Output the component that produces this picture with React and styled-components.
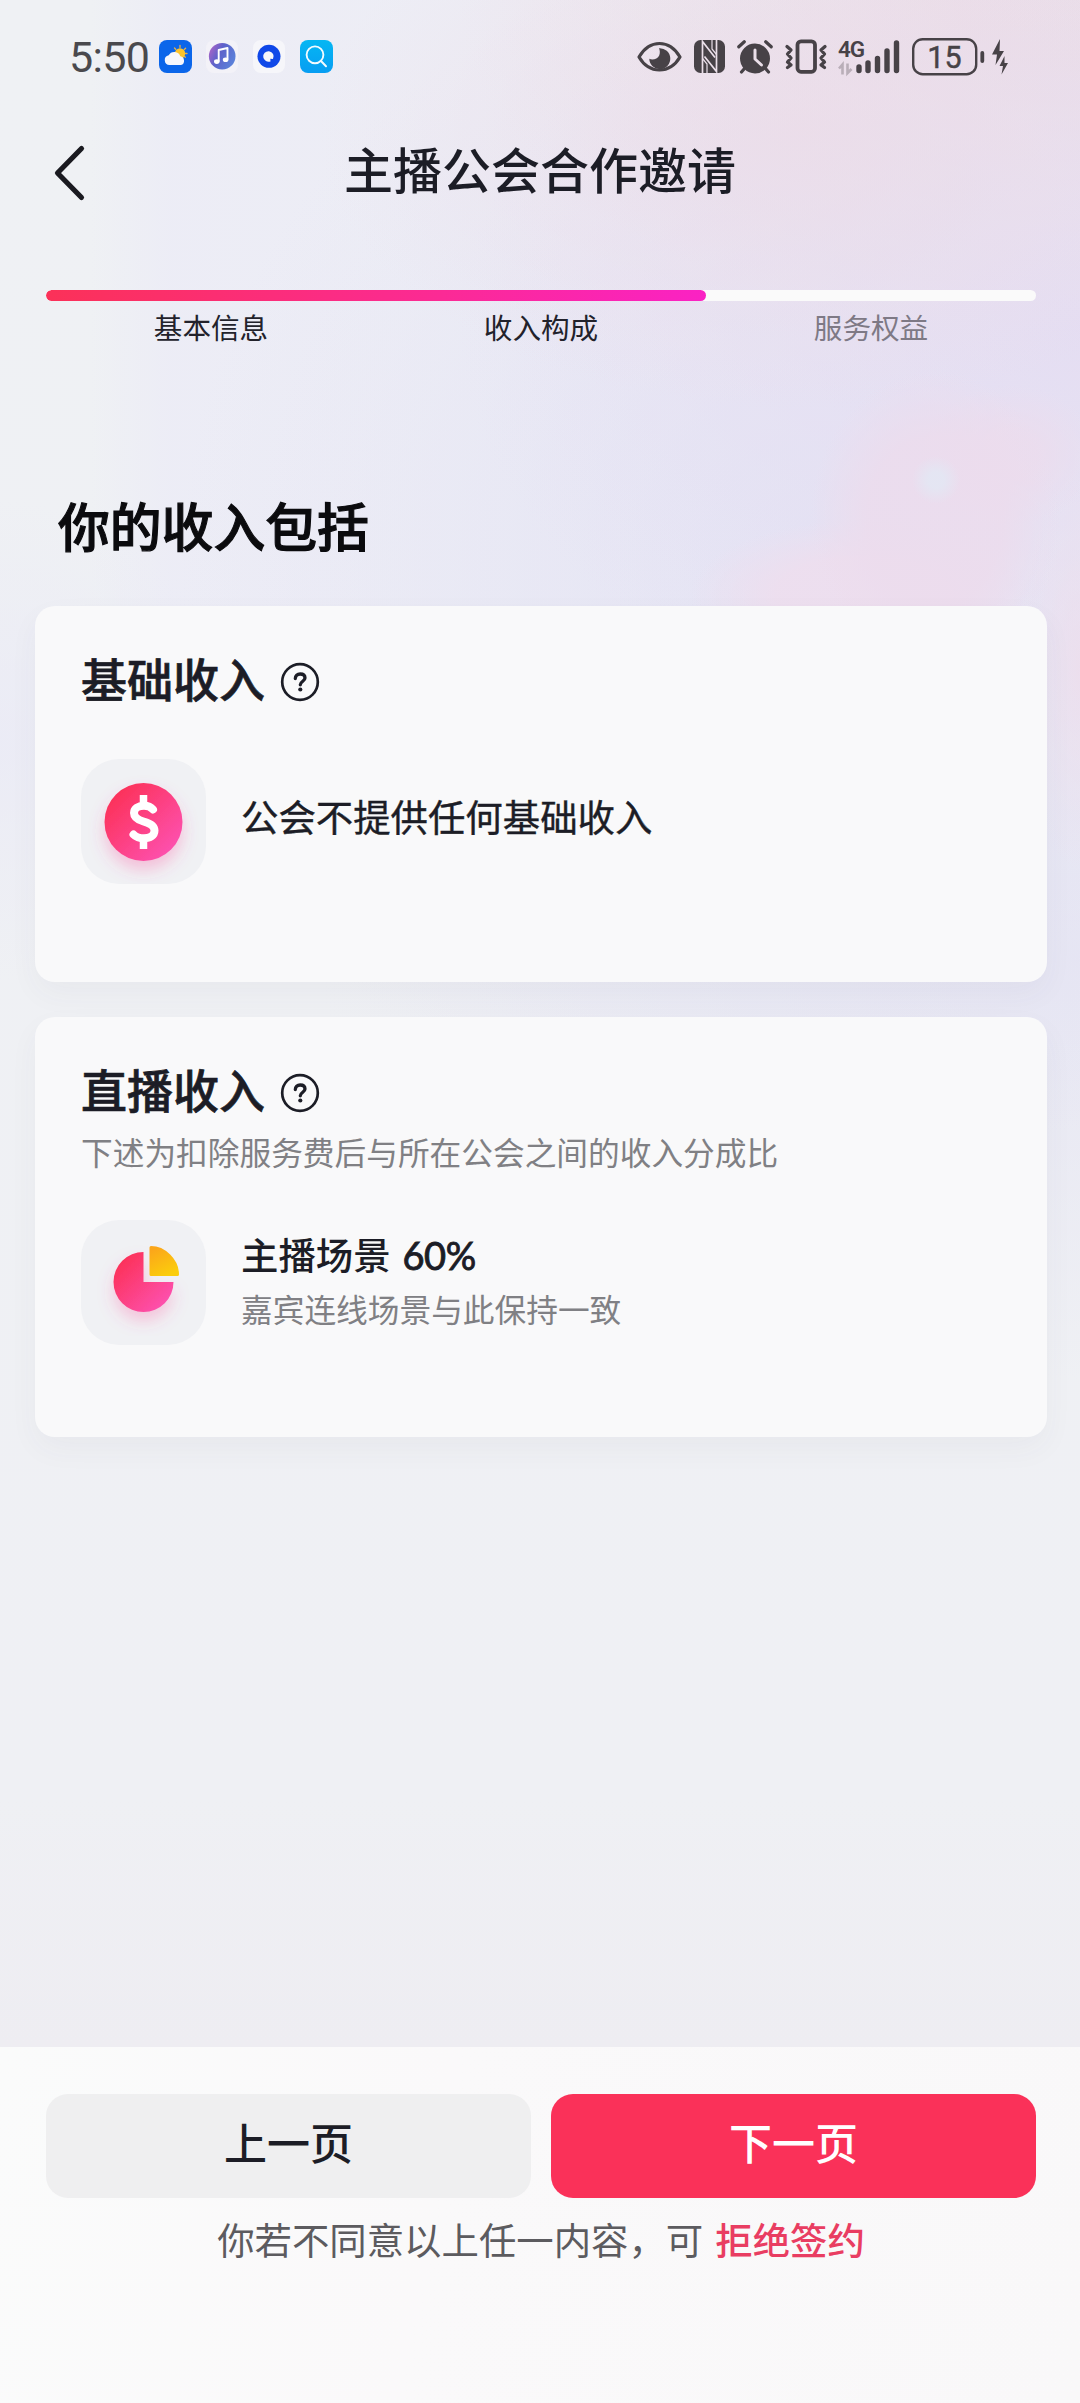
import React from "react";
import styled, { createGlobalStyle } from "styled-components";

const GlobalStyle = createGlobalStyle`
  * { box-sizing: border-box; }
  body { margin: 0; background: #eff0f4; }
`;

const Screen = styled.div`
  width: 1080px;
  height: 2403px;
  display: flex;
  flex-direction: column;
  overflow: hidden;
  font-family: "Noto Sans CJK SC", sans-serif;
  color: #1c1d26;
  background:
    radial-gradient(circle at 936px 480px, rgba(228, 230, 243, 0.95) 8px, rgba(228, 230, 243, 0) 24px),
    radial-gradient(ellipse 125px 150px at 935px 520px, rgba(236, 220, 237, 0.85) 55%, rgba(236, 220, 237, 0) 100%),
    radial-gradient(ellipse 90px 70px at 1010px 455px, rgba(236, 220, 237, 0.8) 30%, rgba(236, 220, 237, 0) 100%),
    radial-gradient(ellipse 170px 75px at 860px 595px, rgba(238, 222, 238, 0.85) 50%, rgba(238, 222, 238, 0) 100%),
    radial-gradient(ellipse 60px 200px at 1080px 670px, rgba(237, 221, 236, 0.8) 0, rgba(237, 221, 236, 0) 100%),
    radial-gradient(ellipse 480px 280px at 800px 130px, rgba(236, 220, 232, 0.75) 0, rgba(236, 220, 232, 0) 100%),
    radial-gradient(ellipse 620px 420px at 1080px 330px, rgba(228, 220, 242, 0.9) 0, rgba(228, 220, 242, 0) 100%),
    radial-gradient(ellipse 620px 340px at 1080px 0, rgba(235, 222, 231, 0.95) 20%, rgba(235, 222, 231, 0) 100%),
    radial-gradient(ellipse 640px 620px at 820px 560px, rgba(226, 225, 244, 0.8) 0, rgba(226, 225, 244, 0) 100%),
    radial-gradient(ellipse 760px 420px at 1080px 960px, rgba(229, 228, 243, 0.85) 0, rgba(229, 228, 243, 0) 100%),
    radial-gradient(ellipse 240px 240px at 0 740px, rgba(234, 234, 246, 0.8) 0, rgba(234, 234, 246, 0) 100%),
    linear-gradient(90deg, rgba(236, 237, 246, 0) 90px, rgba(236, 236, 246, 0.9) 170px, rgba(236, 235, 244, 0.3) 900px) 0 0 / 1080px 640px no-repeat,
    linear-gradient(#eff1f4 0, #eff0f4 1800px, #eeedf2 2047px);
`;

const StatusBar = styled.div`
  height: 113px;
  display: flex;
  align-items: center;
  justify-content: space-between;
  padding: 0 71px 0 69px;
  color: #474247;
  svg { display: block; flex: none; overflow: visible; }
`;

const StatusGroup = styled.div`
  display: flex;
  align-items: center;
`;

const Clock = styled.span`
  width: 90px;
  font: 400 43px/56px Roboto, sans-serif;
  letter-spacing: -0.7px;
  color: #4a494d;
  white-space: nowrap;
`;

const Gap = styled.span`
  flex: none;
  width: ${(p) => p.$w}px;
`;

const Header = styled.header`
  height: 115px;
  display: grid;
  grid-template-columns: 140px 1fr 140px;
  align-items: center;
`;

const BackButton = styled.button`
  display: flex;
  border: 0;
  padding: 4px 0 0 49px;
  background: none;
`;

const Title = styled.h1`
  margin: 0 0 5px;
  font-size: 49px;
  font-weight: 500;
  line-height: 70px;
  text-align: center;
  white-space: nowrap;
`;

const Progress = styled.div`
  margin: 62px 44px 0 46px;
`;

const Track = styled.div`
  height: 11px;
  border-radius: 6px;
  background: #fafafa;
  overflow: hidden;
`;

const Fill = styled.div`
  width: 66.67%;
  height: 100%;
  border-radius: 6px;
  background: linear-gradient(90deg, #fb3158, #fb2a95 60%, #fa22c4);
`;

const Steps = styled.div`
  display: grid;
  grid-template-columns: repeat(3, 1fr);
  margin-top: 6px;
`;

const Step = styled.span`
  font-size: 28.6px;
  line-height: 40px;
  text-align: center;
  color: ${(p) => (p.$done ? "#22222b" : "#7e7985")};
`;

const Section = styled.main`
  flex: 1;
  padding: 142px 33px 0 35px;
  display: flex;
  flex-direction: column;
`;

const Heading = styled.h2`
  margin: 0 0 45px 23px;
  font-size: 51.8px;
  font-weight: 500;
  line-height: 72px;
  color: #0b0b0e;
  -webkit-text-stroke: 1.1px #0b0b0e;
`;

const Card = styled.section`
  height: ${(p) => p.$h}px;
  margin-bottom: 35px;
  padding: 38px 46px 0;
  border-radius: 20px;
  background: #f9f9fa;
  box-shadow: 0 12px 30px rgba(60, 60, 100, 0.045);
`;

const CardTitle = styled.h3`
  display: flex;
  align-items: center;
  gap: 15px;
  margin: 0;
  font-size: 46px;
  font-weight: 500;
  line-height: 66px;
  -webkit-text-stroke: 0.7px #1c1d26;
  svg { display: block; margin-top: 10px; }
`;

const CardNote = styled.p`
  margin: 8px 0 0;
  font-size: 31.7px;
  line-height: 44px;
  color: #808084;
`;

const Item = styled.div`
  display: flex;
  align-items: center;
  gap: 35px;
  margin-top: ${(p) => p.$top}px;
`;

const IconTile = styled.div`
  flex: none;
  width: 125px;
  height: 125px;
  border-radius: 38px;
  background: #f0f1f4;
  svg { display: block; }
`;

const ItemText = styled.div`
  display: flex;
  flex-direction: column;
  gap: 4px;
  margin-top: ${(p) => p.$shift || 0}px;
`;

const ItemTitle = styled.span`
  font-size: 37.4px;
  font-weight: ${(p) => (p.$strong ? 500 : 400)};
  line-height: 52px;
  white-space: nowrap;
  -webkit-text-stroke: ${(p) => (p.$strong ? 0 : 0.4)}px #1c1d26;
`;

const Percent = styled.span`
  margin-left: 12px;
  font-family: Lato, sans-serif;
  font-weight: 400;
  font-size: 38px;
  letter-spacing: -0.5px;
  -webkit-text-stroke: 0.9px #1c1d26;
`;

const ItemNote = styled.span`
  font-size: 31.7px;
  line-height: 46px;
  color: #808084;
`;

const Footer = styled.footer`
  height: 356px;
  padding: 47px 44px 0 46px;
  background: linear-gradient(100deg, #fafbfb, #faf9fa 40%, #f9f8f9);
`;

const Buttons = styled.div`
  display: grid;
  grid-template-columns: 1fr 1fr;
  gap: 20px;
`;

const Button = styled.button`
  height: 104px;
  border: 0;
  border-radius: 22px;
  padding: 0 0 10px;
  font: 500 43px/60px "Noto Sans CJK SC", sans-serif;
  color: ${(p) => (p.$primary ? "#fff" : "#1c1d26")};
  background: ${(p) => (p.$primary ? "#fa3159" : "#efeff0")};
`;

const Decline = styled.p`
  margin: 14px 0 0;
  font-size: 37.4px;
  line-height: 54px;
  text-align: center;
  color: #5c5b5f;
  white-space: nowrap;
`;

const DeclineLink = styled.a`
  margin-left: 12px;
  font-weight: 500;
  color: #e93d62;
`;

const WeatherIcon = () => (
  <svg width="33" height="33" viewBox="0 0 33 33">
    <rect width="33" height="33" rx="8" fill="#0b66ea" />
    <g stroke="#e8b04a" strokeWidth="1.3" strokeLinecap="round">
      <path d="M21 5.5v2M15.5 8l1.2 1.3M26.6 8.2l-1.3 1.3M28 13.5h-1.6M26.4 17.2l-1-.8" />
    </g>
    <circle cx="21" cy="13.5" r="5.2" fill="#fcc42c" />
    <path d="M10.5 25a4.9 4.9 0 0 1-.8-9.7 6.3 6.3 0 0 1 11.6 1A4.5 4.5 0 0 1 22 25z" fill="#f6f8fd" />
  </svg>
);

const MusicIcon = () => (
  <svg width="32" height="33" viewBox="0 0 32 33">
    <defs>
      <linearGradient id="music" x1="0" y1="0.3" x2="1" y2="0.8">
        <stop offset="0" stopColor="#a565c8" />
        <stop offset="0.35" stopColor="#5e62ca" />
        <stop offset="1" stopColor="#5a86dc" />
      </linearGradient>
    </defs>
    <rect width="32" height="33" rx="8" fill="#f3f2f8" />
    <circle cx="16.2" cy="16.2" r="13.3" fill="url(#music)" />
    <path d="M12.7 21.5V10l8.8-2v11.5" fill="none" stroke="#fff" strokeWidth="1.9" strokeLinejoin="round" />
    <ellipse cx="10.8" cy="21.6" rx="2.8" ry="2.3" fill="#fff" />
    <ellipse cx="19.6" cy="19.8" rx="2.8" ry="2.3" fill="#fff" />
  </svg>
);

const BrowserIcon = () => (
  <svg width="32" height="33" viewBox="0 0 32 33">
    <rect width="32" height="33" rx="8" fill="#f6f6fa" />
    <circle cx="16" cy="16.3" r="11.5" fill="#1048e8" />
    <path d="M16 11.2a5.3 5.3 0 1 0 1.5 10.2l-.2-2.6 2.7.2a5.3 5.3 0 0 0-4-7.8z" fill="#f6f6fa" />
  </svg>
);

const SearchIcon = () => (
  <svg width="33" height="33" viewBox="0 0 33 33">
    <defs>
      <linearGradient id="search" x1="0" y1="0" x2="0" y2="1">
        <stop offset="0" stopColor="#05b7f3" />
        <stop offset="1" stopColor="#079df2" />
      </linearGradient>
    </defs>
    <rect width="33" height="33" rx="8" fill="url(#search)" />
    <circle cx="15" cy="14.8" r="8.4" fill="none" stroke="#f3fbff" strokeWidth="1.9" />
    <path d="M21 21l5 5.2" stroke="#f3fbff" strokeWidth="2" strokeLinecap="round" />
  </svg>
);

const EyeIcon = () => (
  <svg width="45" height="32" viewBox="0 0 45 32">
    <path d="M2 16C7 7.500 14 2.500 22.500 2.500S38 7.500 43 16C38 24.500 31 29 22.500 29S7 24.500 2 16z" fill="none" stroke="currentColor" strokeWidth="3.2" strokeLinejoin="round" />
    <path d="M22 7.200A10.500 10.500 0 1 1 12.300 17.800C15 19.500 20.500 18.500 22.200 14.500C23.300 11.800 22.800 9 22 7.200z" fill="currentColor" />
  </svg>
);

const NfcIcon = () => (
  <svg width="31" height="33" viewBox="0 0 31 33">
    <rect width="31" height="33" rx="6.500" fill="currentColor" />
    <g fill="none" stroke="#eadfe9" strokeWidth="1.700">
      <path d="M8.500 33V1.500L21 17.500" />
      <path d="M22.500 0V31.500L10.500 16.500" />
      <path d="M13 33V24L8.500 18.500" strokeWidth="1.200" />
      <path d="M18 0V9L22.500 14.500" strokeWidth="1.200" />
    </g>
  </svg>
);

const AlarmIcon = () => (
  <svg width="36" height="34" viewBox="0 0 36 34">
    <circle cx="18" cy="18.500" r="15" fill="currentColor" />
    <path d="M1.800 6.800L7.300 1.800M34.200 6.800L28.700 1.800M7.500 28.500L4.500 32M28.500 28.500L31.500 32" stroke="currentColor" strokeWidth="3.200" strokeLinecap="round" />
    <path d="M18 10v9l6.500 6" fill="none" stroke="#eadfe9" strokeWidth="3" strokeLinecap="round" strokeLinejoin="round" />
  </svg>
);

const VibrateIcon = () => (
  <svg width="42" height="35" viewBox="0 0 42 35">
    <rect x="12.500" y="2.300" width="17.500" height="30.500" rx="3.500" fill="none" stroke="currentColor" strokeWidth="3.800" />
    <path d="M2 7.500L6 11L2.500 15L6 19L2.500 23L6 26L2.500 28.500M40 7.500L36 11L39.500 15L36 19L39.500 23L36 26L39.500 28.500" fill="none" stroke="currentColor" strokeWidth="3.300" strokeLinejoin="round" strokeLinecap="round" />
  </svg>
);

const Network = styled.div`
  width: 26px;
  height: 36px;
  margin-right: -8px;
  display: flex;
  flex-direction: column;
  justify-content: space-between;
`;

const NetworkType = styled.span`
  font: 600 22.5px/20px Roboto, sans-serif;
  letter-spacing: -1px;
  white-space: nowrap;
`;

const NetworkIcon = () => (
  <Network>
    <NetworkType>4G</NetworkType>
    <svg width="15" height="12" viewBox="0 0 15 12">
      <path d="M4.500 11.500V1.500L1 5.500M9.500 .5V10L13.500 6" fill="none" stroke="#b9aeb8" strokeWidth="2.600" />
    </svg>
  </Network>
);

const SignalIcon = () => (
  <svg width="45" height="36" viewBox="18 0 45 36">
    <g stroke="currentColor" strokeWidth="5.400" strokeLinecap="round">
      <path d="M21 28V31.500M30 24V31.500M39.500 19.500V31.500M49 12V31.500M58.500 4V31.500" />
    </g>
  </svg>
);

const BatteryIcon = () => (
  <svg width="73" height="38" viewBox="0 0 73 38">
    <rect x="1.200" y="1.200" width="63" height="35" rx="9.500" fill="none" stroke="currentColor" strokeWidth="2.400" />
    <text x="32.500" y="29.500" textAnchor="middle" fontFamily="Roboto, sans-serif" fontSize="30.500" fill="currentColor" stroke="currentColor" strokeWidth="0.400">15</text>
    <path d="M70.300 15V23" stroke="currentColor" strokeWidth="3.800" strokeLinecap="round" />
  </svg>
);

const BoltIcon = () => (
  <svg width="17" height="36" viewBox="0 0 17 36">
    <path d="M8 0L0 15.500H5L3.500 26L12 12H7.500z" fill="currentColor" />
    <path d="M12.500 17L7.500 27H11L9.500 35.500L16 24H12.500z" fill="currentColor" />
  </svg>
);

const HelpIcon = () => (
  <svg width="40" height="40" viewBox="0 0 40 40" fill="none" stroke="#1c1d26">
    <circle cx="20" cy="20" r="17.800" strokeWidth="2.700" />
    <path d="M15.300 16.600C15.300 13.800 17.300 12 20.200 12C23.200 12 25 13.700 25 16.100C25 19.200 20.300 19.300 20.300 22.800" strokeWidth="3.300" strokeLinecap="round" />
    <circle cx="20.300" cy="27.500" r="2.100" fill="#1c1d26" stroke="none" />
  </svg>
);

const CoinIcon = () => (
  <svg width="125" height="125" viewBox="0 0 125 125">
    <defs>
      <linearGradient id="coin" x1="0.150" y1="0.150" x2="0.850" y2="0.850">
        <stop offset="0" stopColor="#fc325b" />
        <stop offset="1" stopColor="#fd50ac" />
      </linearGradient>
      <filter id="coinGlow" x="-30%" y="-30%" width="160%" height="170%">
        <feDropShadow dx="0" dy="9" stdDeviation="8" floodColor="#fd4a96" floodOpacity="0.300" />
      </filter>
    </defs>
    <circle cx="62.500" cy="63" r="39" fill="url(#coin)" filter="url(#coinGlow)" />
    <path d="M72 50.500C69.500 47.500 66.500 46.800 63 46.800C57 46.800 53 49.700 53 54C53 58.500 56.500 60.700 62.500 62.500C69 64.300 73.500 66.700 73.500 71.500C73.500 76.500 69 79.300 63 79.300C58.500 79.300 55 78 52.500 75.500" fill="none" stroke="#fff" strokeWidth="8" strokeLinecap="round" />
    <path d="M62.500 36V47M62.500 79V90" stroke="#fff" strokeWidth="7.500" />
  </svg>
);

const PieIcon = () => (
  <svg width="125" height="125" viewBox="0 0 125 125">
    <defs>
      <linearGradient id="pie" x1="0.150" y1="0.150" x2="0.850" y2="0.850">
        <stop offset="0" stopColor="#fc325b" />
        <stop offset="1" stopColor="#fd50ac" />
      </linearGradient>
      <linearGradient id="slice" x1="0.200" y1="0" x2="0.700" y2="1">
        <stop offset="0" stopColor="#fba61a" />
        <stop offset="1" stopColor="#fbcd0c" />
      </linearGradient>
      <filter id="pieGlow" x="-30%" y="-30%" width="160%" height="170%">
        <feDropShadow dx="0" dy="9" stdDeviation="8" floodColor="#fd4a96" floodOpacity="0.280" />
      </filter>
    </defs>
    <path d="M62.500 32V62H92.500A30 30 0 1 1 62.500 32z" fill="url(#pie)" filter="url(#pieGlow)" />
    <path d="M70 27.500C83 27.500 96.500 40 96.500 54.500H70z" fill="url(#slice)" stroke="url(#slice)" strokeWidth="3" strokeLinejoin="round" />
  </svg>
);

const STEPS = [
  { label: "基本信息", done: true },
  { label: "收入构成", done: true },
  { label: "服务权益", done: false },
];

export default function App() {
  return (
    <Screen>
      <GlobalStyle />
      <StatusBar>
        <StatusGroup>
          <Clock>5:50</Clock>
          <WeatherIcon />
          <Gap $w={14} />
          <MusicIcon />
          <Gap $w={15} />
          <BrowserIcon />
          <Gap $w={15} />
          <SearchIcon />
        </StatusGroup>
        <StatusGroup>
          <EyeIcon />
          <Gap $w={12} />
          <NfcIcon />
          <Gap $w={12} />
          <AlarmIcon />
          <Gap $w={12} />
          <VibrateIcon />
          <Gap $w={11} />
          <NetworkIcon />
          <SignalIcon />
          <Gap $w={11} />
          <BatteryIcon />
          <Gap $w={7} />
          <BoltIcon />
        </StatusGroup>
      </StatusBar>

      <Header>
        <BackButton aria-label="返回">
          <svg width="40" height="60" viewBox="0 0 40 60" fill="none">
            <path d="M32.500 5.500L8.500 30L32.500 54.500" stroke="#1a1a20" strokeWidth="5.200" strokeLinecap="round" strokeLinejoin="round" />
          </svg>
        </BackButton>
        <Title>主播公会合作邀请</Title>
      </Header>

      <Progress>
        <Track>
          <Fill />
        </Track>
        <Steps>
          {STEPS.map((s) => (
            <Step key={s.label} $done={s.done}>{s.label}</Step>
          ))}
        </Steps>
      </Progress>

      <Section>
        <Heading>你的收入包括</Heading>

        <Card $h={376}>
          <CardTitle>
            基础收入
            <HelpIcon />
          </CardTitle>
          <Item $top={49}>
            <IconTile>
              <CoinIcon />
            </IconTile>
            <ItemText $shift={-12}>
              <ItemTitle>公会不提供任何基础收入</ItemTitle>
            </ItemText>
          </Item>
        </Card>

        <Card $h={420}>
          <CardTitle>
            直播收入
            <HelpIcon />
          </CardTitle>
          <CardNote>下述为扣除服务费后与所在公会之间的收入分成比</CardNote>
          <Item $top={47}>
            <IconTile>
              <PieIcon />
            </IconTile>
            <ItemText $shift={-7}>
              <ItemTitle $strong>
                主播场景<Percent>60%</Percent>
              </ItemTitle>
              <ItemNote>嘉宾连线场景与此保持一致</ItemNote>
            </ItemText>
          </Item>
        </Card>
      </Section>

      <Footer>
        <Buttons>
          <Button>上一页</Button>
          <Button $primary>下一页</Button>
        </Buttons>
        <Decline>
          你若不同意以上任一内容，可
          <DeclineLink>拒绝签约</DeclineLink>
        </Decline>
      </Footer>
    </Screen>
  );
}
